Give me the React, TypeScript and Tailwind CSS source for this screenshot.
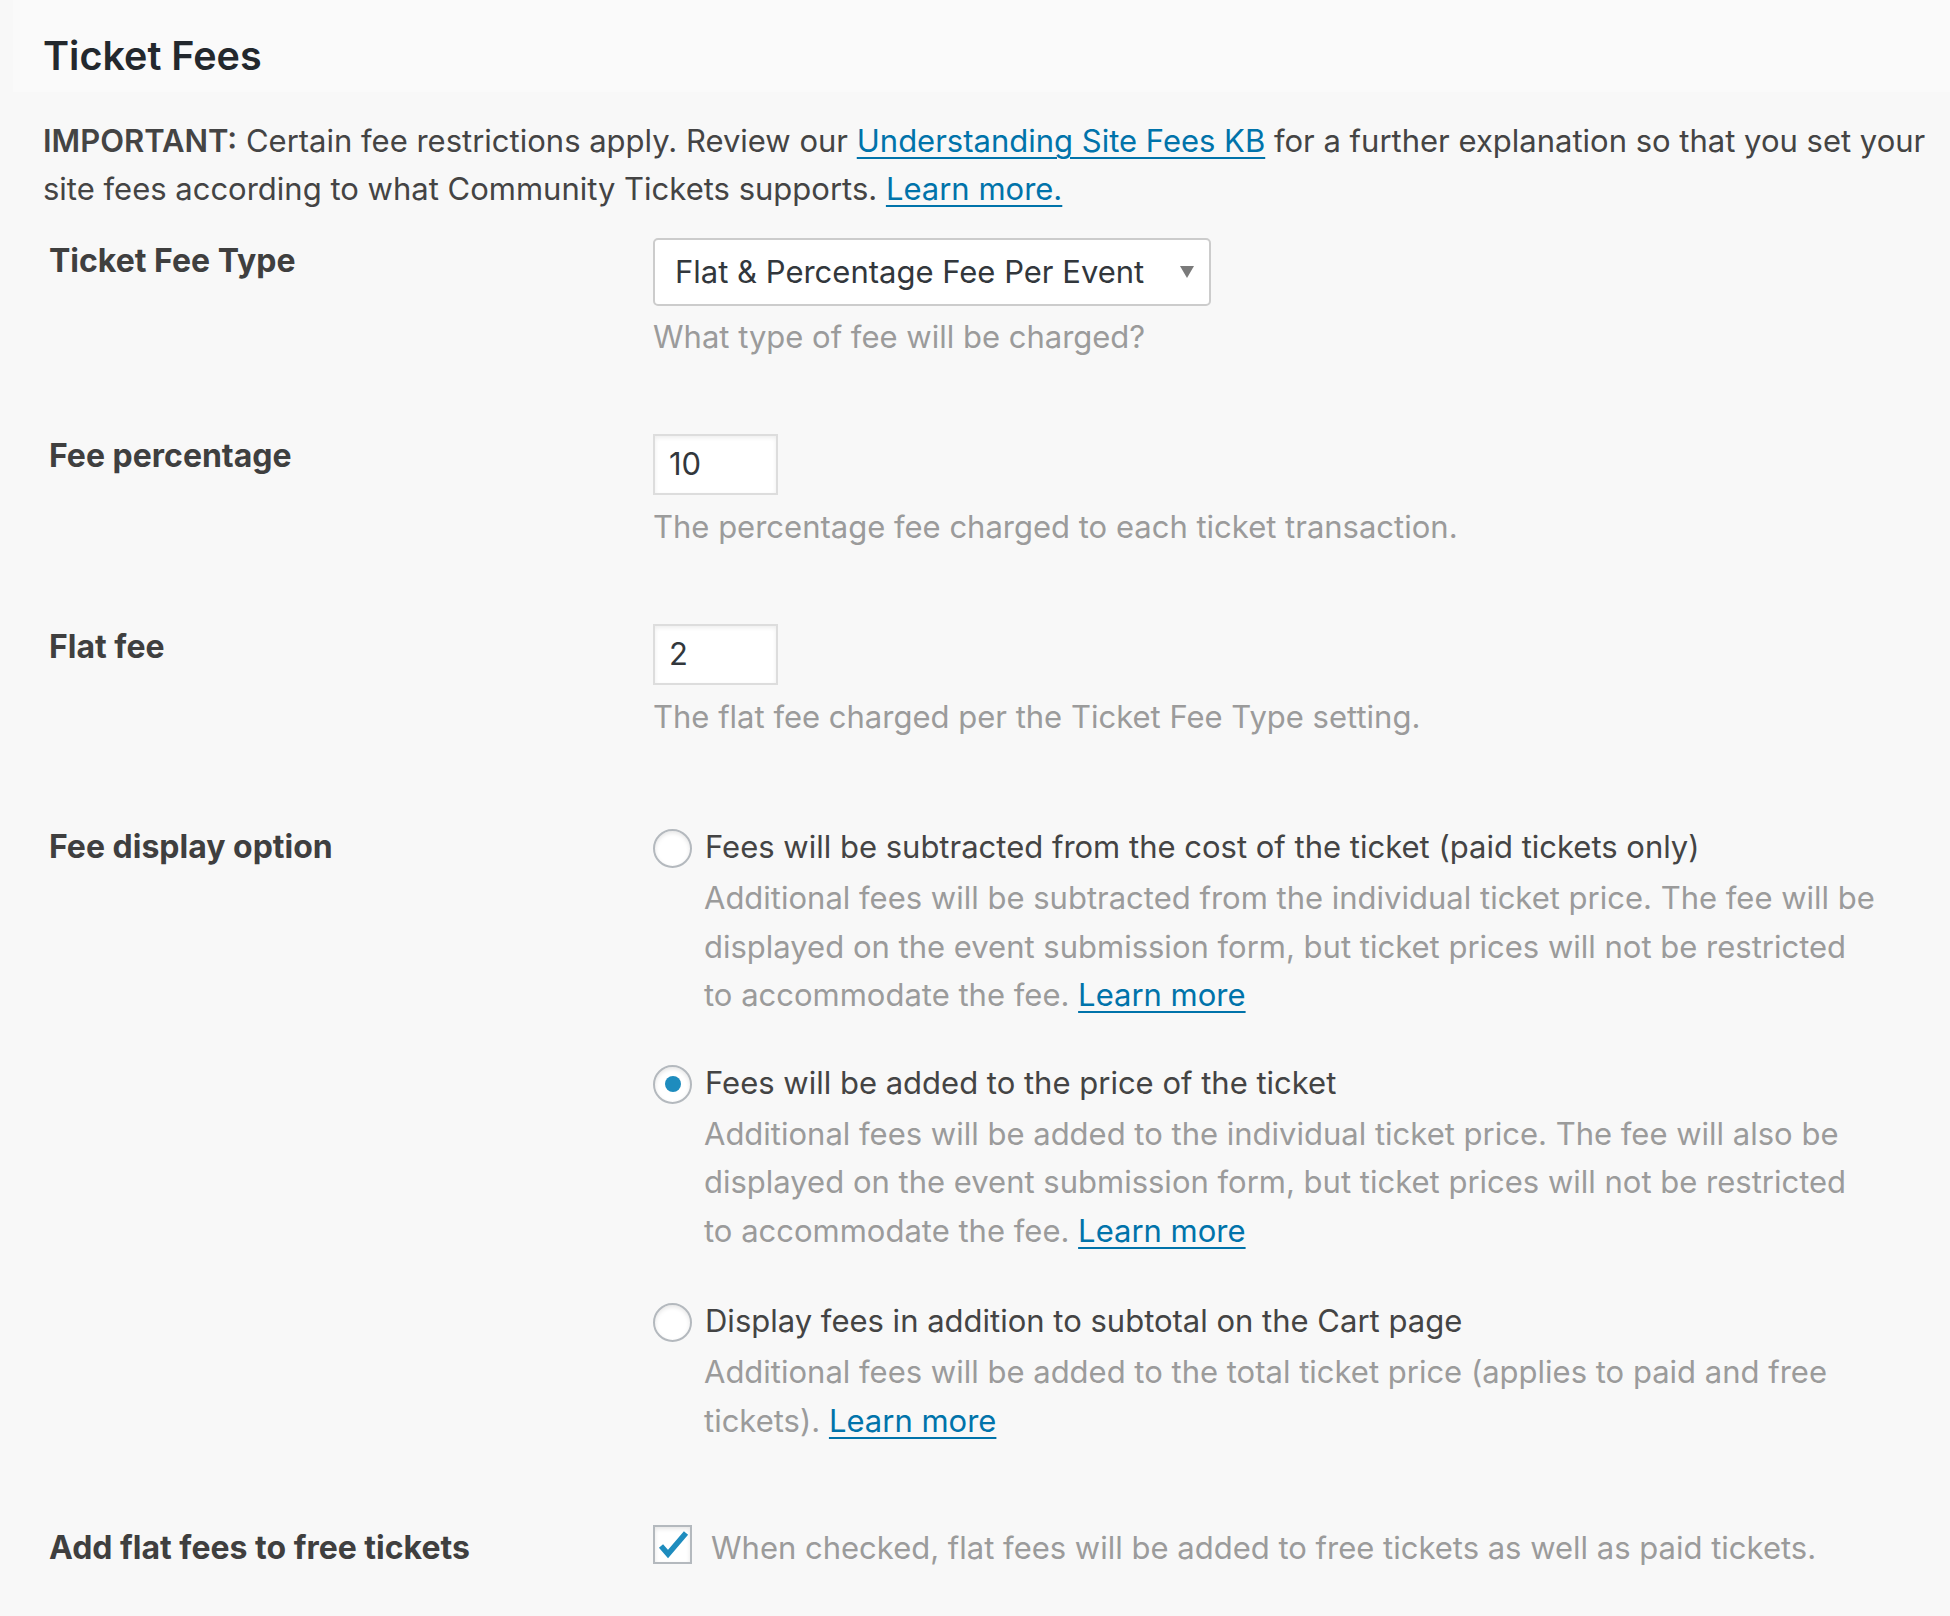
import React from "react";

const link = "text-[#0073aa] underline decoration-[2px] underline-offset-[5px]";

function Radio({ checked }: { checked?: boolean }) {
  return (
    <span className="mt-[2px] flex h-[39px] w-[39px] shrink-0 items-center justify-center rounded-full border-2 border-[#b4b9be] bg-white shadow-[inset_0_2px_4px_rgba(0,0,0,0.1)]">
      {checked && <span className="h-[16px] w-[16px] rounded-full bg-[#1e8cbe]" />}
    </span>
  );
}

function RadioOption({
  checked,
  label,
  children,
  className = "",
}: {
  checked?: boolean;
  label: string;
  children: React.ReactNode;
  className?: string;
}) {
  return (
    <div className={className}>
      <label className="flex items-start gap-[13px] leading-[40px] text-[#444]">
        <Radio checked={checked} />
        <span>{label}</span>
      </label>
      <p className="ml-[51px] mt-[6px] max-w-[1175px] leading-[48.5px] text-[#9b9b9b]">{children}</p>
    </div>
  );
}

function TextInput({ value }: { value: string }) {
  return (
    <div className="flex h-[61px] w-[125px] items-center border-2 border-[#dddddd] bg-white pl-[14px] text-[31px] text-[#32373c] shadow-[inset_0_2px_4px_rgba(0,0,0,0.07)]">
      {value}
    </div>
  );
}

const label = "w-[604px] font-bold text-[32px] leading-[40px] text-[#3f3f3f]";

export default function App() {
  return (
    <div className="min-h-[1616px] bg-[#f8f8f8] font-['Inter',sans-serif] text-[31px] text-[#444]">
      {/* Section heading */}
      <div className="ml-[13px] flex h-[92px] items-start bg-[#fafafa] pl-[30px] pt-[30px]">
        <h2 className="text-[39.5px] font-semibold leading-[52px] text-[#23282d]">Ticket Fees</h2>
      </div>

      <p className="ml-[43px] mt-[25px] max-w-[1900px] leading-[48px]">
        <strong className="font-semibold">IMPORTANT:</strong> Certain fee restrictions apply. Review our{" "}
        <a className={link}>Understanding Site Fees KB</a> for a further explanation so that you set your site fees
        according to what Community Tickets supports. <a className={link}>Learn more.</a>
      </p>

      <div className="ml-[49px]">
        {/* Ticket Fee Type */}
        <div className="mt-[25px] flex">
          <div className={`${label} pt-[3px]`}>Ticket Fee Type</div>
          <div>
            <div className="flex h-[68px] w-[558px] items-center justify-between rounded-[5px] border-2 border-[#cccccc] bg-white pl-[20px] pr-[15px] text-[31px] text-[#32373c]">
              <span>Flat &amp; Percentage Fee Per Event</span>
              <svg width="14" height="12" viewBox="0 0 14 12">
                <polygon points="0,0 14,0 7,12" fill="#7a7a7a" />
              </svg>
            </div>
            <p className="mt-[7px] leading-[48px] text-[#9b9b9b]">What type of fee will be charged?</p>
          </div>
        </div>

        {/* Fee percentage */}
        <div className="mt-[73px] flex">
          <div className={`${label} pt-[2px]`}>Fee percentage</div>
          <div>
            <TextInput value="10" />
            <p className="mt-[8px] leading-[48px] text-[#9b9b9b]">The percentage fee charged to each ticket transaction.</p>
          </div>
        </div>

        {/* Flat fee */}
        <div className="mt-[73px] flex">
          <div className={`${label} pt-[3px]`}>Flat fee</div>
          <div>
            <TextInput value="2" />
            <p className="mt-[8px] leading-[48px] text-[#9b9b9b]">The flat fee charged per the Ticket Fee Type setting.</p>
          </div>
        </div>

        {/* Fee display option */}
        <div className="mt-[86px] flex">
          <div className={label}>Fee display option</div>
          <div>
            <RadioOption label="Fees will be subtracted from the cost of the ticket (paid tickets only)">
              Additional fees will be subtracted from the individual ticket price. The fee will be displayed on the
              event submission form, but ticket prices will not be restricted to accommodate the fee.{" "}
              <a className={link}>Learn more</a>
            </RadioOption>
            <RadioOption checked label="Fees will be added to the price of the ticket" className="mt-[43px]">
              Additional fees will be added to the individual ticket price. The fee will also be displayed on the
              event submission form, but ticket prices will not be restricted to accommodate the fee.{" "}
              <a className={link}>Learn more</a>
            </RadioOption>
            <RadioOption label="Display fees in addition to subtotal on the Cart page" className="mt-[46px]">
              Additional fees will be added to the total ticket price (applies to paid and free tickets).{" "}
              <a className={link}>Learn more</a>
            </RadioOption>
          </div>
        </div>

        {/* Add flat fees to free tickets */}
        <div className="mt-[80px] flex pb-[40px]">
          <div className={`${label} pt-[3px]`}>Add flat fees to free tickets</div>
          <label className="flex items-start gap-[19px]">
            <span className="flex h-[39px] w-[39px] shrink-0 items-center justify-center border-2 border-[#b4b9be] bg-white shadow-[inset_0_2px_4px_rgba(0,0,0,0.1)]">
              <svg width="35" height="35" viewBox="0 0 35 35">
                <polyline points="6,19 13,27 31,6" fill="none" stroke="#1e8cbe" strokeWidth="5.5" strokeLinejoin="miter" />
              </svg>
            </span>
            <span className="pt-[3px] leading-[40px] text-[#9b9b9b]">
              When checked, flat fees will be added to free tickets as well as paid tickets.
            </span>
          </label>
        </div>
      </div>
    </div>
  );
}
